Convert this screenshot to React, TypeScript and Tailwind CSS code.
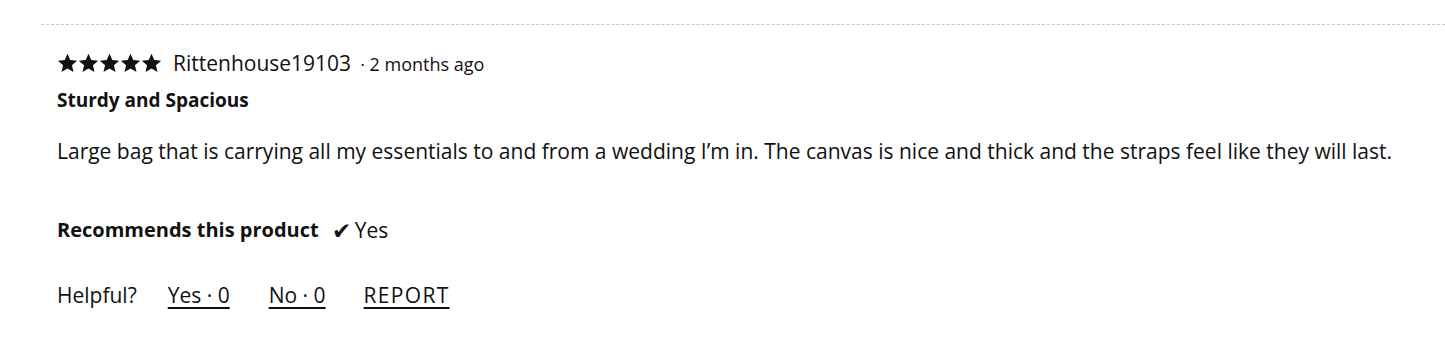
import React from "react";

function Star() {
  return (
    <svg width="21" height="20" viewBox="0 0 24 23" className="block">
      <path d="M12 0.8l3.2 7.3 7.9.7-6 5.3 1.8 7.8L12 17.8l-6.9 4.1 1.8-7.8-6-5.3 7.9-.7z" fill="#111" />
    </svg>
  );
}

export default function App() {
  return (
    <div className="bg-white w-[1445px] h-[358px] text-[#111]" style={{ fontFamily: "'Open Sans', 'Noto Sans', sans-serif" }}>
      <div className="pt-[24px]">
        <div className="ml-[41px] border-t border-dashed border-[#c8c8c8]">
          <div className="pl-[16px] pt-[24px]">
            <div className="flex items-center h-[28px]">
              <div className="flex">
                <Star /><Star /><Star /><Star /><Star />
              </div>
              <span className="ml-[11px] text-[21px] leading-[28px]">Rittenhouse19103</span>
              <span className="ml-[9px] text-[18px] leading-[28px] pt-[2px]">· 2 months ago</span>
            </div>
            <div className="mt-[11px] text-[19px] font-bold leading-[24px]">Sturdy and Spacious</div>
            <div className="mt-[25px] text-[21px] leading-[28px]">
              Large bag that is carrying all my essentials to and from a wedding I’m in. The canvas is nice and thick and the straps feel like they will last.
            </div>
            <div className="mt-[51px] flex items-center text-[20px] leading-[28px]">
              <span className="font-bold">Recommends this product</span>
              <span className="ml-[13px] text-[23px] leading-[28px]">✔</span>
              <span className="ml-[4px] text-[21px]">Yes</span>
            </div>
            <div className="mt-[37px] flex items-center text-[21px] leading-[28px]">
              <span>Helpful?</span>
              <span className="ml-[31px] underline underline-offset-4">Yes · 0</span>
              <span className="ml-[39px] underline underline-offset-4">No · 0</span>
              <span className="ml-[38px] underline underline-offset-4 tracking-[1.3px]">REPORT</span>
            </div>
          </div>
        </div>
      </div>
    </div>
  );
}
